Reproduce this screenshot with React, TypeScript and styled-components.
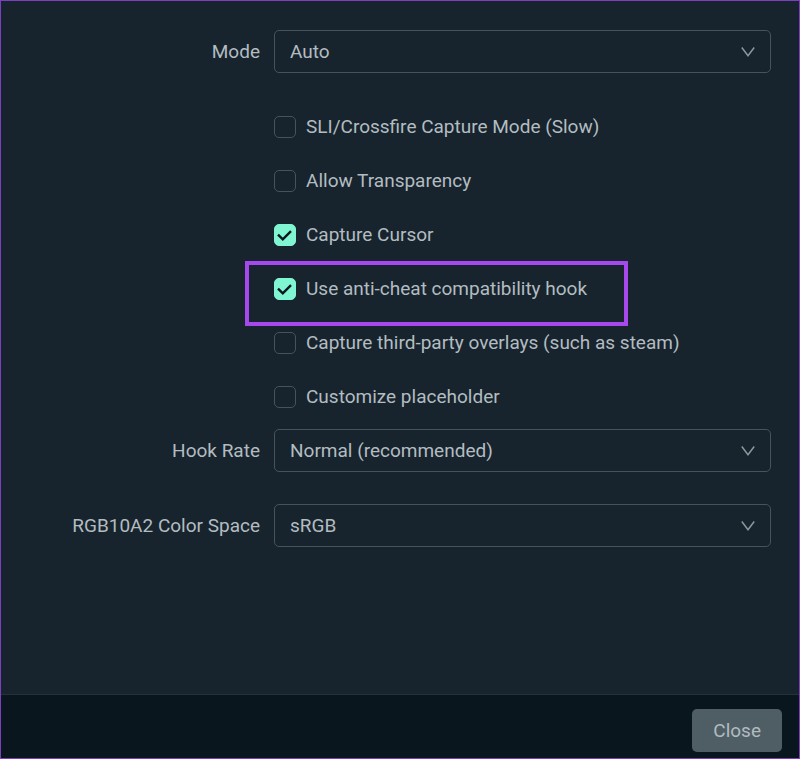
import React, { useId, useState } from "react";
import styled, { createGlobalStyle } from "styled-components";

const GlobalStyle = createGlobalStyle`
  *, *::before, *::after { box-sizing: border-box; }
  body {
    margin: 0;
    background: #17242d;
    color: #b3bcc1;
    font-family: Roboto, "Liberation Sans", sans-serif;
    font-size: 19px;
    line-height: 24px;
  }
`;

const Dialog = styled.main`
  display: flex;
  flex-direction: column;
  min-height: 100vh;
  border: 1px solid #7b3fc0;
  background: #17242d;
`;

const Form = styled.form`
  flex: 1;
  padding: 29px 28px 28px 0;
`;

const Row = styled.div`
  display: grid;
  grid-template-columns: 259px minmax(0, 1fr);
  column-gap: 14px;
  align-items: center;
  & + & {
    margin-top: 32px;
  }
`;

const FieldLabel = styled.label`
  text-align: right;
`;

const SelectBox = styled.div`
  display: grid;
  align-items: center;
  > * {
    grid-area: 1 / 1;
  }
`;

const Select = styled.select`
  appearance: none;
  width: 100%;
  height: 43px;
  padding: 0 44px 0 15px;
  border: 1px solid #46535a;
  border-radius: 5px;
  background: transparent;
  color: inherit;
  font: inherit;
  option {
    background: #17242d;
  }
`;

const Chevron = styled.svg`
  justify-self: end;
  width: 16px;
  height: 12px;
  margin-right: 15px;
  fill: none;
  stroke: #8d979c;
  stroke-width: 1.5;
  pointer-events: none;
`;

const CheckList = styled.div`
  margin: 27px 0 5px 273px;
`;

const CheckRow = styled.div`
  position: relative;
  display: flex;
  align-items: center;
  height: 54px;
`;

const CheckLabel = styled.label`
  display: flex;
  align-items: center;
  gap: 10px;
`;

const TickBox = styled.span`
  display: grid;
  width: 22px;
  height: 22px;
  > * {
    grid-area: 1 / 1;
  }
`;

const Checkbox = styled.input`
  appearance: none;
  width: 22px;
  height: 22px;
  margin: 0;
  border: 1px solid #46535a;
  border-radius: 5px;
  &:checked {
    border-color: #80f5d2;
    background: #80f5d2;
  }
`;

const Tick = styled.svg`
  width: 22px;
  height: 22px;
  fill: none;
  stroke: #09161d;
  stroke-width: 2.4;
  pointer-events: none;
`;

const Highlight = styled.div`
  position: absolute;
  top: -1px;
  left: -29px;
  width: 383px;
  height: 65px;
  border: 4px solid #a747ee;
  pointer-events: none;
`;

const Footer = styled.footer`
  display: flex;
  justify-content: flex-end;
  padding: 14px 17px 6px;
  border-top: 1px solid #253239;
  background: #09161d;
`;

const Button = styled.button`
  height: 43px;
  padding: 0 21px;
  border: 0;
  border-radius: 5px;
  background: #4f5e65;
  color: #b1bbc0;
  font: inherit;
`;

function SelectField({ label, options }: { label: string; options: string[] }) {
  const id = useId();
  return (
    <Row>
      <FieldLabel htmlFor={id}>{label}</FieldLabel>
      <SelectBox>
        <Select id={id}>
          {options.map((option) => (
            <option key={option}>{option}</option>
          ))}
        </Select>
        <Chevron viewBox="0 0 16 12" aria-hidden="true">
          <path d="M1.8 1.5 8 9.8 14.2 1.5" />
        </Chevron>
      </SelectBox>
    </Row>
  );
}

interface CheckFieldProps {
  label: string;
  initial?: boolean;
  highlighted?: boolean;
}

function CheckField({ label, initial = false, highlighted = false }: CheckFieldProps) {
  const [checked, setChecked] = useState(initial);
  return (
    <CheckRow>
      <CheckLabel>
        <TickBox>
          <Checkbox
            type="checkbox"
            checked={checked}
            onChange={(event) => setChecked(event.target.checked)}
          />
          {checked && (
            <Tick viewBox="0 0 22 22" aria-hidden="true">
              <path d="M4 10.6 8.8 15.3 17 7.2" />
            </Tick>
          )}
        </TickBox>
        {label}
      </CheckLabel>
      {highlighted && <Highlight />}
    </CheckRow>
  );
}

export default function App() {
  return (
    <>
      <GlobalStyle />
      <Dialog>
        <Form>
          <SelectField label="Mode" options={["Auto"]} />
          <CheckList>
            <CheckField label="SLI/Crossfire Capture Mode (Slow)" />
            <CheckField label="Allow Transparency" />
            <CheckField label="Capture Cursor" initial />
            <CheckField label="Use anti-cheat compatibility hook" initial highlighted />
            <CheckField label="Capture third-party overlays (such as steam)" />
            <CheckField label="Customize placeholder" />
          </CheckList>
          <SelectField label="Hook Rate" options={["Normal (recommended)"]} />
          <SelectField label="RGB10A2 Color Space" options={["sRGB"]} />
        </Form>
        <Footer>
          <Button type="button">Close</Button>
        </Footer>
      </Dialog>
    </>
  );
}
